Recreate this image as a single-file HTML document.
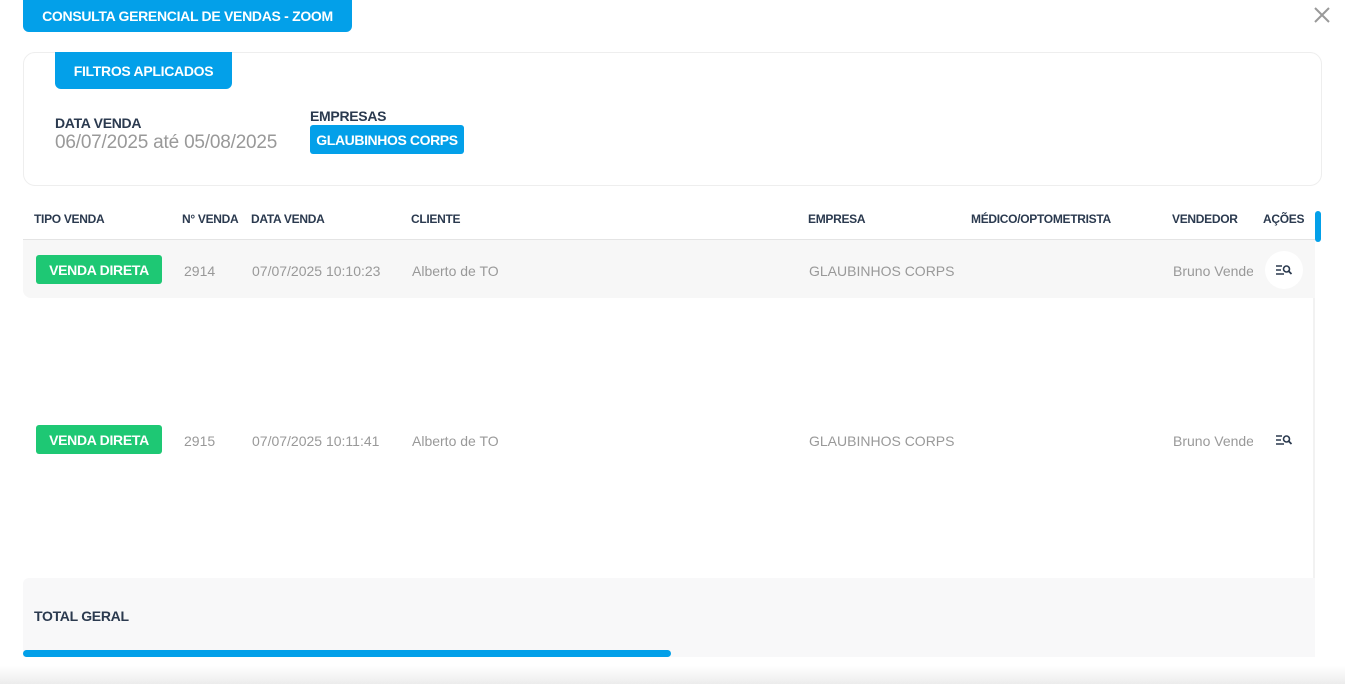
<!DOCTYPE html>
<html><head><meta charset="utf-8"><style>
*{margin:0;padding:0;box-sizing:border-box}
body{width:1345px;height:684px;background:#fff;font-family:"Liberation Sans",Arial,sans-serif;position:relative;overflow:hidden;color:#2b3a4f}
.a{position:absolute;white-space:nowrap}
.btn{background:#03a0e9;color:#fff;font-weight:bold;border-radius:0 0 6px 6px;font-size:14px;display:flex;align-items:center;justify-content:center;letter-spacing:-0.3px}
.th{font-size:12px;font-weight:bold;top:212px;color:#2b3a4f;letter-spacing:-0.3px}
.td{font-size:14px;color:#999}
.tag{background:#1ec874;color:#fff;font-weight:bold;font-size:14px;border-radius:3px;width:126px;height:29px;display:flex;align-items:center;justify-content:center;letter-spacing:-0.3px}
.ic{width:38px;height:38px;border-radius:50%;background:#fff;display:flex;align-items:center;justify-content:center}
</style></head><body>
<div class="a btn" style="left:23px;top:0;width:329px;height:32px">CONSULTA GERENCIAL DE VENDAS - ZOOM</div>
<svg class="a" style="left:1313px;top:6px" width="18" height="18"><path d="M2 2L16 16M16 2L2 16" stroke="#999" stroke-width="2"/></svg>
<div class="a" style="left:23px;top:52px;width:1299px;height:134px;border:1px solid #eee;border-radius:12px"></div>
<div class="a btn" style="left:55px;top:52px;width:177px;height:37px">FILTROS APLICADOS</div>
<div class="a" style="left:55px;top:115px;font-size:14px;font-weight:bold;color:#2b3a4f;letter-spacing:-0.3px">DATA VENDA</div>
<div class="a" style="left:55px;top:132px;font-size:19px;color:#999;letter-spacing:-0.2px">06/07/2025 até 05/08/2025</div>
<div class="a" style="left:310px;top:108px;font-size:14px;font-weight:bold;letter-spacing:-0.3px">EMPRESAS</div>
<div class="a" style="left:310px;top:125px;width:154px;height:29px;background:#03a0e9;color:#fff;font-weight:bold;font-size:14px;border-radius:3px;display:flex;align-items:center;justify-content:center;letter-spacing:-0.4px">GLAUBINHOS CORPS</div>
<div class="a th" style="left:34px">TIPO VENDA</div>
<div class="a th" style="left:182px">N° VENDA</div>
<div class="a th" style="left:251px">DATA VENDA</div>
<div class="a th" style="left:411px">CLIENTE</div>
<div class="a th" style="left:808px">EMPRESA</div>
<div class="a th" style="left:971px">MÉDICO/OPTOMETRISTA</div>
<div class="a th" style="left:1172px">VENDEDOR</div>
<div class="a th" style="left:1263px">AÇÕES</div>
<div class="a" style="left:1315px;top:211px;width:6px;height:31px;background:#03a0e9;border-radius:3px"></div>
<div class="a" style="left:23px;top:239px;width:1292px;height:1px;background:#e4e4e4"></div>
<div class="a" style="left:23px;top:240px;width:1292px;height:58px;background:#f7f7f7;border-radius:0 0 0 8px"></div>
<div class="a" style="left:1313px;top:298px;width:2px;height:280px;background:#f2f2f2"></div>
<div class="a tag" style="left:36px;top:255px">VENDA DIRETA</div>
<div class="a td" style="left:184px;top:263px">2914</div>
<div class="a td" style="left:252px;top:263px">07/07/2025 10:10:23</div>
<div class="a td" style="left:412px;top:263px">Alberto de TO</div>
<div class="a td" style="left:809px;top:263px">GLAUBINHOS CORPS</div>
<div class="a td" style="left:1173px;top:263px;width:80px;overflow:hidden">Bruno Vendedor</div>
<div class="a ic" style="left:1265px;top:251px"><svg width="18" height="12"><path d="M1 2h6M1 6h5M1 10h8" stroke="#2b3a4f" stroke-width="1.6"/><circle cx="11.5" cy="5" r="3" fill="none" stroke="#2b3a4f" stroke-width="1.6"/><path d="M13.5 7l3 3" stroke="#2b3a4f" stroke-width="1.8"/></svg></div>
<div class="a tag" style="left:36px;top:425px">VENDA DIRETA</div>
<div class="a td" style="left:184px;top:433px">2915</div>
<div class="a td" style="left:252px;top:433px">07/07/2025 10:11:41</div>
<div class="a td" style="left:412px;top:433px">Alberto de TO</div>
<div class="a td" style="left:809px;top:433px">GLAUBINHOS CORPS</div>
<div class="a td" style="left:1173px;top:433px;width:80px;overflow:hidden">Bruno Vendedor</div>
<div class="a" style="left:1265px;top:421px;width:38px;height:38px;display:flex;align-items:center;justify-content:center"><svg width="18" height="12"><path d="M1 2h6M1 6h5M1 10h8" stroke="#2b3a4f" stroke-width="1.6"/><circle cx="11.5" cy="5" r="3" fill="none" stroke="#2b3a4f" stroke-width="1.6"/><path d="M13.5 7l3 3" stroke="#2b3a4f" stroke-width="1.8"/></svg></div>
<div class="a" style="left:23px;top:578px;width:1292px;height:79px;background:#f8f8f9;border-radius:6px 0 0 0"></div>
<div class="a" style="left:34px;top:608px;font-size:14px;font-weight:bold;letter-spacing:-0.3px">TOTAL GERAL</div>
<div class="a" style="left:23px;top:650px;width:648px;height:7px;background:#03a0e9;border-radius:4px"></div>
<div class="a" style="left:0;top:666px;width:1345px;height:18px;background:linear-gradient(#fff,#ececec)"></div>
</body></html>
